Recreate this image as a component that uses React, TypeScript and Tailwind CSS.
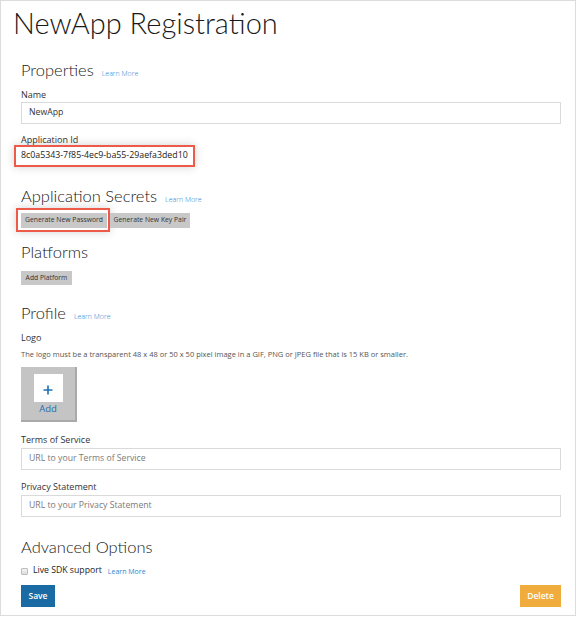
const LearnMore = () => (
  <span className="ml-[8px] font-['Open_Sans',sans-serif] text-[7px] leading-[10px] text-[#2b86d4]">Learn More</span>
)

const Heading = ({ text, mt, learn }: { text: string; mt: string; learn?: boolean }) => (
  <div className={`${mt} flex items-baseline font-['Lato',sans-serif] text-[16.5px] font-light leading-[22px] text-[#1a1a1a]`}>
    <span>{text}</span>
    {learn && <LearnMore />}
  </div>
)

const Label = ({ text, mt }: { text: string; mt: string }) => (
  <div className={`${mt} text-[9px] leading-[12px] text-[#333]`}>{text}</div>
)

const Field = ({ value, placeholder, mt }: { value?: string; placeholder?: string; mt: string }) => (
  <div className={`${mt} flex h-[22px] w-[540px] items-center border border-[#dadada] px-[7px] text-[8.7px]`}>
    {value ? <span className="text-[#333]">{value}</span> : <span className="text-[#7a7a7a]">{placeholder}</span>}
  </div>
)

const GrayButton = ({ text, w }: { text: string; w: string }) => (
  <div className={`flex h-[15px] ${w} items-center justify-center whitespace-nowrap bg-[#c8c8c8] text-[6.8px] text-[#333]`}>
    {text}
  </div>
)

export default function App() {
  return (
    <div className="h-[616px] w-[576px] border border-[#dcdcdc] bg-white font-['Open_Sans',sans-serif]">
      <h1 className="ml-[12px] mt-[6px] font-['Lato',sans-serif] text-[29px] font-light leading-[32px] text-[#1a1a1a]">
        NewApp Registration
      </h1>

      <div className="flex flex-col items-start pl-[20px]">
        <Heading text="Properties" mt="mt-[20px]" learn />
        <Label text="Name" mt="mt-[8px]" />
        <Field value="NewApp" mt="mt-[1px]" />

        <Label text="Application Id" mt="mt-[10px]" />
        <div className="ml-[-7px] mt-[-1px] flex h-[22px] items-center border-2 border-[#ee5a4a] pl-[5px] pr-[5px] text-[8.8px] text-[#222] shadow-[0_0_10px_rgba(0,0,0,0.18)]">
          8c0a5343-7f85-4ec9-ba55-29aefa3ded10
        </div>

        <Heading text="Application Secrets" mt="mt-[18px]" learn />
        <div className="mt-[1px] flex items-start">
          <div className="ml-[-5px] border-2 border-[#ee5a4a] pb-[2px] pl-[3px] pr-[1px] pt-[3px] shadow-[0_0_10px_rgba(0,0,0,0.18)]">
            <GrayButton text="Generate New Password" w="w-[86px]" />
          </div>
          <div className="mt-[5px]">
            <GrayButton text="Generate New Key Pair" w="w-[80px]" />
          </div>
        </div>

        <Heading text="Platforms" mt="mt-[9px]" />
        <div className="mt-[8px] flex h-[14px] w-[51px] items-center justify-center whitespace-nowrap bg-[#c8c8c8] text-[6.8px] text-[#333]">
          Add Platform
        </div>

        <Heading text="Profile" mt="mt-[17px]" learn />
        <Label text="Logo" mt="mt-[8px]" />
        <div className="mt-[5px] text-[7.5px] leading-[10px] text-[#555]">
          The logo must be a transparent 48 x 48 or 50 x 50 pixel image in a GIF, PNG or JPEG file that is 15 KB or smaller.
        </div>
        <div className="mt-[8px] flex h-[55px] w-[56px] flex-col items-center border-b-2 border-r-2 border-[#a9a9a9] bg-[#c4c4c4] pt-[7px]">
          <div className="flex h-[28px] w-[29px] shrink-0 items-center justify-center bg-white">
            <svg width="10" height="10" viewBox="0 0 10 10" className="mt-[4px] shrink-0">
              <path d="M5 0.5V9.5M0.5 5H9.5" stroke="#1f6fb5" strokeWidth="1.6" />
            </svg>
          </div>
          <span className="mt-[1px] text-[9.5px] leading-[11px] text-[#1f6fb5]">Add</span>
        </div>

        <Label text="Terms of Service" mt="mt-[12px]" />
        <Field placeholder="URL to your Terms of Service" mt="mt-[2px]" />
        <Label text="Privacy Statement" mt="mt-[11px]" />
        <Field placeholder="URL to your Privacy Statement" mt="mt-[2px]" />

        <Heading text="Advanced Options" mt="mt-[19px]" />
        <div className="mt-[7px] flex h-[12px] items-center">
          <div className="mr-[5px] h-[7px] w-[7px] rounded-[1px] border border-[#bdbdbd] bg-gradient-to-b from-[#f4f4f4] to-[#dcdcdc]" />
          <span className="text-[8.7px] text-[#222]">Live SDK support</span>
          <span className="ml-[6px] mt-[2px] text-[7px] text-[#2b86d4]">Learn More</span>
        </div>

        <div className="mt-[8px] flex w-[540px] justify-between">
          <div className="flex h-[22px] w-[34px] items-center justify-center bg-[#1a6aa4] text-[8.5px] font-semibold text-white">
            Save
          </div>
          <div className="flex h-[22px] w-[41px] items-center justify-center bg-[#f0ac3c] text-[8.5px] font-semibold text-white">
            Delete
          </div>
        </div>
      </div>
    </div>
  )
}
